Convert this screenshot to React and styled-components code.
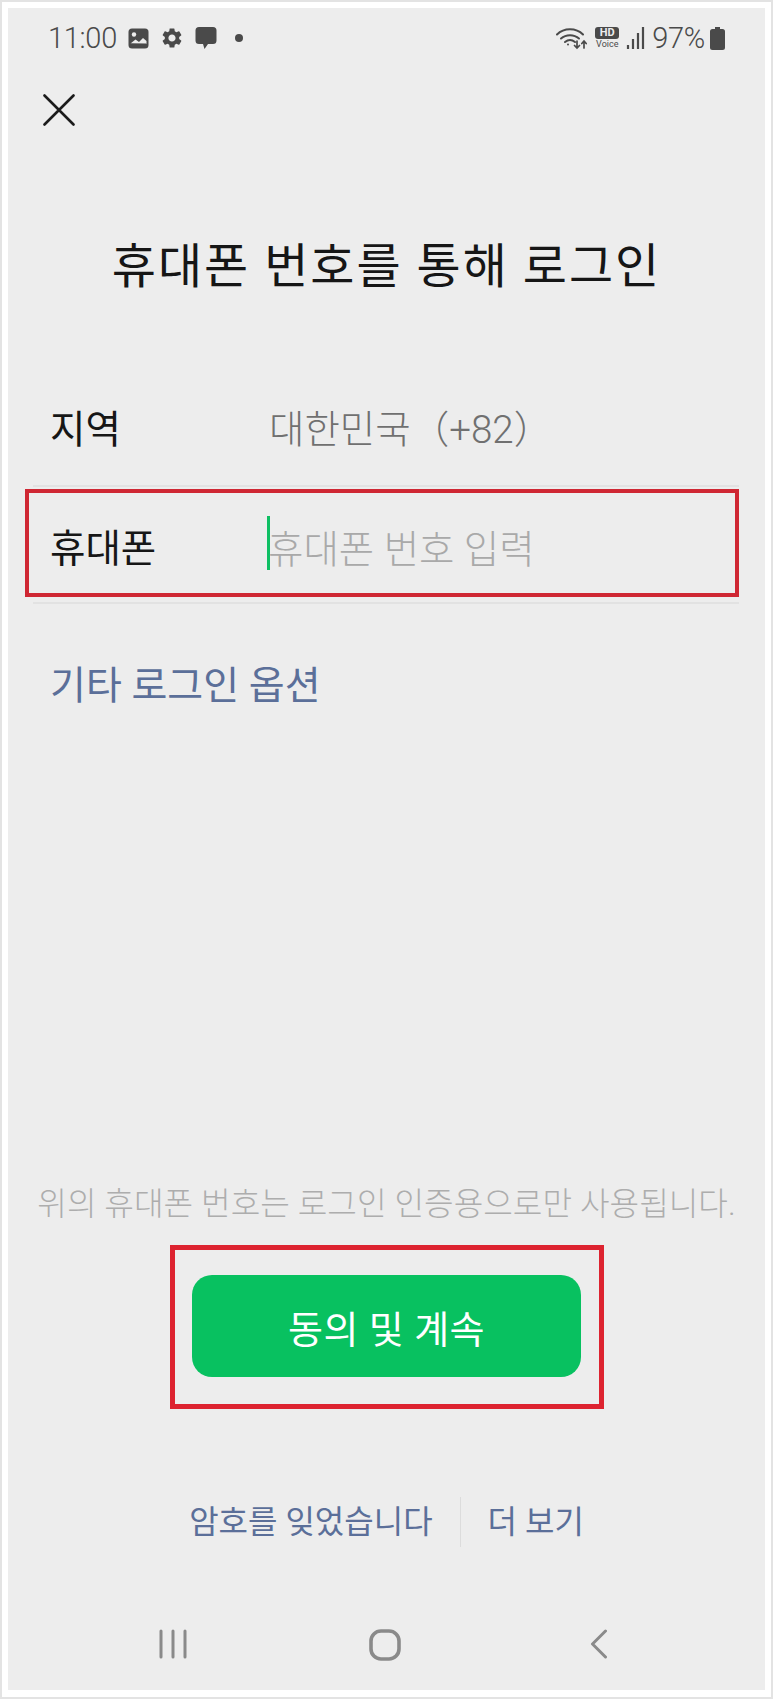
import React from 'react'
import styled, { createGlobalStyle } from 'styled-components'
import { MdSettings } from 'react-icons/md'

const GlobalStyle = createGlobalStyle`
  html, body {
    margin: 0;
    padding: 0;
    background: #fff;
  }
  * {
    box-sizing: border-box;
  }
`

const Frame = styled.div`
  width: 773px;
  height: 1699px;
  padding: 6px 6px 7px;
  border: 2px solid #e3e3e3;
  background: #fff;
  font-family: Roboto, 'Noto Sans CJK KR', sans-serif;
`

const Screen = styled.main`
  height: 100%;
  background: #ededed;
  display: flex;
  flex-direction: column;
`

const StatusBar = styled.header`
  height: 44px;
  margin-top: 8px;
  padding: 0 40px;
  display: flex;
  align-items: center;
  justify-content: space-between;
  color: #4a4a4a;
`

const StatusGroup = styled.div`
  display: flex;
  align-items: center;
  gap: ${p => p.$gap}px;
`

const StatusText = styled.span`
  font-size: 29px;
  font-weight: 300;
  letter-spacing: -0.3px;
`

const StatusDot = styled.span`
  width: 8px;
  height: 8px;
  margin-left: 7px;
  border-radius: 50%;
  background: #4a4a4a;
`

const HdBadge = styled.div`
  width: 24px;
  display: flex;
  flex-direction: column;
  align-items: center;
`

const HdMark = styled.span`
  width: 24px;
  height: 12px;
  border-radius: 3px;
  background: #4a4a4a;
  color: #ededed;
  font: 700 11px/12px Roboto, sans-serif;
  text-align: center;
`

const VoiceMark = styled.span`
  font: 400 9px/11px Roboto, sans-serif;
  white-space: nowrap;
`

const BatterySlot = styled.span`
  display: flex;
  margin-left: -2px;
`

const CloseButton = styled.button`
  width: 32px;
  height: 32px;
  margin: 34px 0 0 35px;
  padding: 0;
  border: 0;
  background: none;
  color: #1b1b1b;
  display: block;
`

const Title = styled.h1`
  margin: 111px 0 0;
  text-align: center;
  color: #161616;
  font-size: 48px;
  font-weight: 400;
  line-height: 60px;
  letter-spacing: 2px;
  white-space: nowrap;
`

const Fields = styled.section`
  margin-top: 76px;
  padding-left: 17px;
`

const Row = styled.div`
  height: 114px;
  margin-right: 26px;
  margin-left: 8px;
  padding: 0 0 6px 17px;
  display: flex;
  align-items: center;
  border-bottom: 2px solid #e2e2e2;
`

const HighlightRow = styled.div`
  height: 108px;
  margin: 2px 26px 0 0;
  padding-left: 21px;
  display: flex;
  align-items: center;
  border: 4px solid #cf2733;
`

const Divider = styled.div`
  height: 2px;
  margin: 5px 26px 0 8px;
  background: #e2e2e2;
`

const Label = styled.span`
  width: ${p => p.$width}px;
  flex: none;
  color: #161616;
  font-size: 38.500px;
  padding-top: ${p => p.$drop || 0}px;
`

const Value = styled.span`
  color: #707070;
  font-size: 38.500px;
  font-weight: 300;
`

const Caret = styled.span`
  width: 3px;
  height: 54px;
  flex: none;
  background: #0ebf63;
`

const Placeholder = styled.span`
  margin-left: -2px;
  padding-top: 6px;
  color: #a9a9a9;
  font-size: 38.500px;
  font-weight: 300;
  white-space: nowrap;
`

const OtherLogin = styled.a`
  display: block;
  margin: 56px 0 0 42px;
  color: #5b6f99;
  font-size: 39px;
  line-height: 52px;
`

const Bottom = styled.section`
  margin-top: auto;
  display: flex;
  flex-direction: column;
  align-items: center;
`

const Notice = styled.p`
  margin: 0;
  color: #adadad;
  font-size: 32.200px;
  font-weight: 300;
  line-height: 44px;
  white-space: nowrap;
`

const Highlight = styled.div`
  width: 434px;
  height: 164px;
  margin-top: 19px;
  padding-bottom: 2px;
  border: 5px solid #dd2330;
  display: flex;
  align-items: center;
  justify-content: center;
`

const PrimaryButton = styled.button`
  width: 389px;
  height: 102px;
  border: 0;
  border-radius: 20px;
  background: #08c160;
  color: #fff;
  font-family: inherit;
  font-size: 38px;
  letter-spacing: 0.5px;
`

const Links = styled.nav`
  margin-top: 88px;
  display: flex;
  align-items: center;
`

const TextLink = styled.a`
  color: #5b6f99;
  font-size: 32px;
  line-height: 50px;
`

const LinkDivider = styled.span`
  width: 1px;
  height: 50px;
  margin: 0 27px;
  background: #dcdcdc;
`

const NavBar = styled.footer`
  height: 99px;
  margin-top: 44px;
  width: 100%;
  padding: 38px 6px 0 0;
  display: flex;
  align-items: flex-start;
  justify-content: center;
  color: #8a8a8a;
  gap: 182px;
`

const BackSlot = styled.span`
  display: flex;
  margin-left: 7px;
`

const ImageIcon = () => (
  <svg width="21" height="21" viewBox="0 0 21 21">
    <rect x="0.5" y="0.5" width="20" height="20" rx="3.5" fill="#4a4a4a" />
    <circle cx="6" cy="6.5" r="2.2" fill="#ededed" />
    <path d="M2.5 15.5l5-4 3.5 2.5 4-4 3.5 3v3z" fill="#ededed" />
    <rect x="2.5" y="15.5" width="16" height="2.5" fill="#4a4a4a" />
  </svg>
)

const ChatIcon = () => (
  <svg width="22" height="24" viewBox="0 0 22 24">
    <path
      d="M4 1h14a3.5 3.5 0 0 1 3.5 3.5v10a3.5 3.5 0 0 1-3.5 3.5h-5l-3.5 5-1.500-5H4a3.500 3.500 0 0 1-3.500-3.500v-10A3.500 3.500 0 0 1 4 1z"
      fill="#4a4a4a"
    />
  </svg>
)

const WifiIcon = () => (
  <svg width="32" height="24" viewBox="0 0 32 24" fill="none" stroke="#4a4a4a" strokeWidth="2" strokeLinecap="round">
    <path d="M1 8.500C8 1.500 20 1.500 27 8.500" />
    <path d="M5 12.500C10 8 18 8 23 12.500" />
    <path d="M9 16C12 13.500 16 13.500 19 16" />
    <circle cx="12" cy="18.500" r="1" fill="#4a4a4a" stroke="none" />
    <path d="M21 15v7M18.500 19.500l2.500 2.500 2.500-2.500" strokeWidth="1.700" />
    <path d="M28 22v-7M25.800 17.500l2.200-2.500 2.200 2.500" strokeWidth="1.700" />
  </svg>
)

const SignalIcon = () => (
  <svg width="19" height="22" viewBox="0 0 19 22" stroke="#4a4a4a" strokeWidth="2.200">
    <path d="M2 22v-4M7 22V12M12 22V6M17 22V0" />
  </svg>
)

const BatteryIcon = () => (
  <svg width="15" height="23" viewBox="0 0 15 23">
    <path
      d="M5 0h5v2h2.500A2.500 2.500 0 0 1 15 4.500V20.500A2.500 2.500 0 0 1 12.500 23h-10A2.500 2.500 0 0 1 0 20.500V4.500A2.500 2.500 0 0 1 2.500 2H5z"
      fill="#4a4a4a"
    />
  </svg>
)

const CloseIcon = () => (
  <svg width="32" height="32" viewBox="0 0 32 32" stroke="currentColor" strokeWidth="2.600" strokeLinecap="round">
    <path d="M1.500 1.500l29 29M30.500 1.500l-29 29" />
  </svg>
)

const RecentsIcon = () => (
  <svg width="28" height="30" viewBox="0 0 28 30" stroke="currentColor" strokeWidth="3" strokeLinecap="round">
    <path d="M2 2v26M14 2v26M26 2v26" />
  </svg>
)

const HomeIcon = () => (
  <svg width="32" height="32" viewBox="0 0 32 32" fill="none" stroke="currentColor" strokeWidth="3.600">
    <rect x="2" y="2" width="28" height="28" rx="10" />
  </svg>
)

const BackIcon = () => (
  <svg width="18" height="30" viewBox="0 0 18 30" fill="none" stroke="currentColor" strokeWidth="3" strokeLinecap="round" strokeLinejoin="round">
    <path d="M15.500 2L2.500 15l13 13" />
  </svg>
)

const App = () => (
  <Frame>
    <GlobalStyle />
    <Screen>
      <StatusBar>
        <StatusGroup $gap={11}>
          <StatusText>11:00</StatusText>
          <ImageIcon />
          <MdSettings size={24} />
          <ChatIcon />
          <StatusDot />
        </StatusGroup>
        <StatusGroup $gap={7}>
          <WifiIcon />
          <HdBadge>
            <HdMark>HD</HdMark>
            <VoiceMark>Voice</VoiceMark>
          </HdBadge>
          <SignalIcon />
          <StatusText>97%</StatusText>
          <BatterySlot>
            <BatteryIcon />
          </BatterySlot>
        </StatusGroup>
      </StatusBar>

      <CloseButton aria-label="닫기">
        <CloseIcon />
      </CloseButton>

      <Title>휴대폰 번호를 통해 로그인</Title>

      <Fields>
        <Row>
          <Label $width={219}>지역</Label>
          <Value>대한민국（+82）</Value>
        </Row>
        <HighlightRow>
          <Label $width={217} $drop={4}>휴대폰</Label>
          <Caret />
          <Placeholder>휴대폰 번호 입력</Placeholder>
        </HighlightRow>
        <Divider />
      </Fields>

      <OtherLogin>기타 로그인 옵션</OtherLogin>

      <Bottom>
        <Notice>위의 휴대폰 번호는 로그인 인증용으로만 사용됩니다.</Notice>
        <Highlight>
          <PrimaryButton>동의 및 계속</PrimaryButton>
        </Highlight>
        <Links>
          <TextLink>암호를 잊었습니다</TextLink>
          <LinkDivider />
          <TextLink>더 보기</TextLink>
        </Links>
        <NavBar>
          <RecentsIcon />
          <HomeIcon />
          <BackSlot>
            <BackIcon />
          </BackSlot>
        </NavBar>
      </Bottom>
    </Screen>
  </Frame>
)

export default App
